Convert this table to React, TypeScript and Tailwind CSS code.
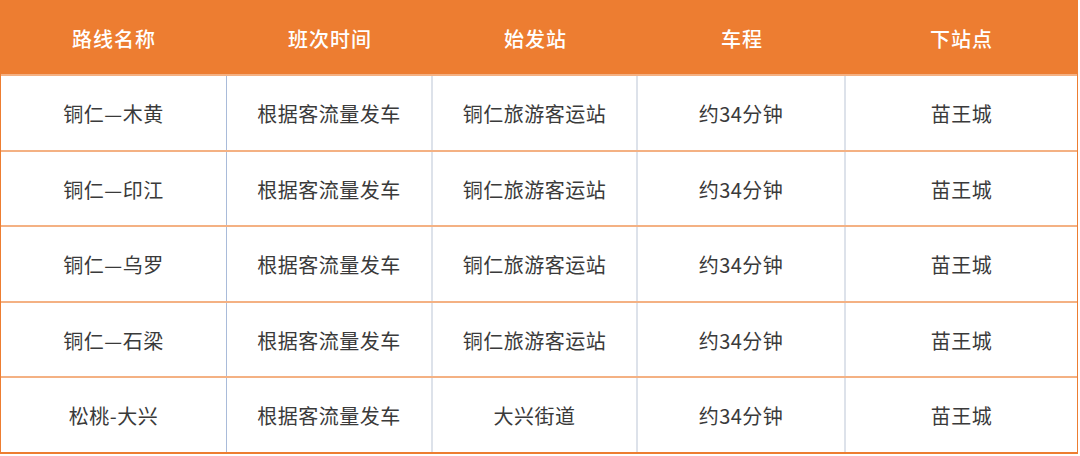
const headers = ["路线名称", "班次时间", "始发站", "车程", "下站点"];

const rows = [
  ["铜仁—木黄", "根据客流量发车", "铜仁旅游客运站", "约34分钟", "苗王城"],
  ["铜仁—印江", "根据客流量发车", "铜仁旅游客运站", "约34分钟", "苗王城"],
  ["铜仁—乌罗", "根据客流量发车", "铜仁旅游客运站", "约34分钟", "苗王城"],
  ["铜仁—石梁", "根据客流量发车", "铜仁旅游客运站", "约34分钟", "苗王城"],
  ["松桃-大兴", "根据客流量发车", "大兴街道", "约34分钟", "苗王城"],
];

const colLines = [
  "border-r border-r-[#a9bbd9]",
  "border-r-2 border-r-[#dde2ea]",
  "border-r-2 border-r-[#dde2ea]",
  "border-r-2 border-r-[#dde2ea]",
  "",
];

export default function App() {
  return (
    <div className="w-[1080px] h-[456px] bg-white" style={{ fontFamily: '"Noto Sans CJK SC", "Noto Sans", sans-serif' }}>
      <div className="w-[1078px] border-x border-[#ed7d31]">
        <div className="grid grid-cols-[226px_206px_205px_208px_1fr] h-[76px] bg-[#ed7d31] border-b-2 border-[#f4b183]">
          {headers.map((h) => (
            <div key={h} className="flex items-center justify-center text-white text-[20px] font-medium tracking-[1px] pt-[3px]">
              {h}
            </div>
          ))}
        </div>
        {rows.map((r, i) => (
          <div
            key={i}
            className={`grid grid-cols-[226px_206px_205px_208px_1fr] h-[75.5px] border-b-2 ${
              i === rows.length - 1 ? "border-[#ed7d31]" : "border-[#f4b183]"
            }`}
          >
            {r.map((c, j) => (
              <div key={j} className={`flex items-center justify-center text-[#3a3a3a] text-[20px] tracking-[0.5px] pt-[3px] ${colLines[j]}`}>
                {c}
              </div>
            ))}
          </div>
        ))}
      </div>
    </div>
  );
}
